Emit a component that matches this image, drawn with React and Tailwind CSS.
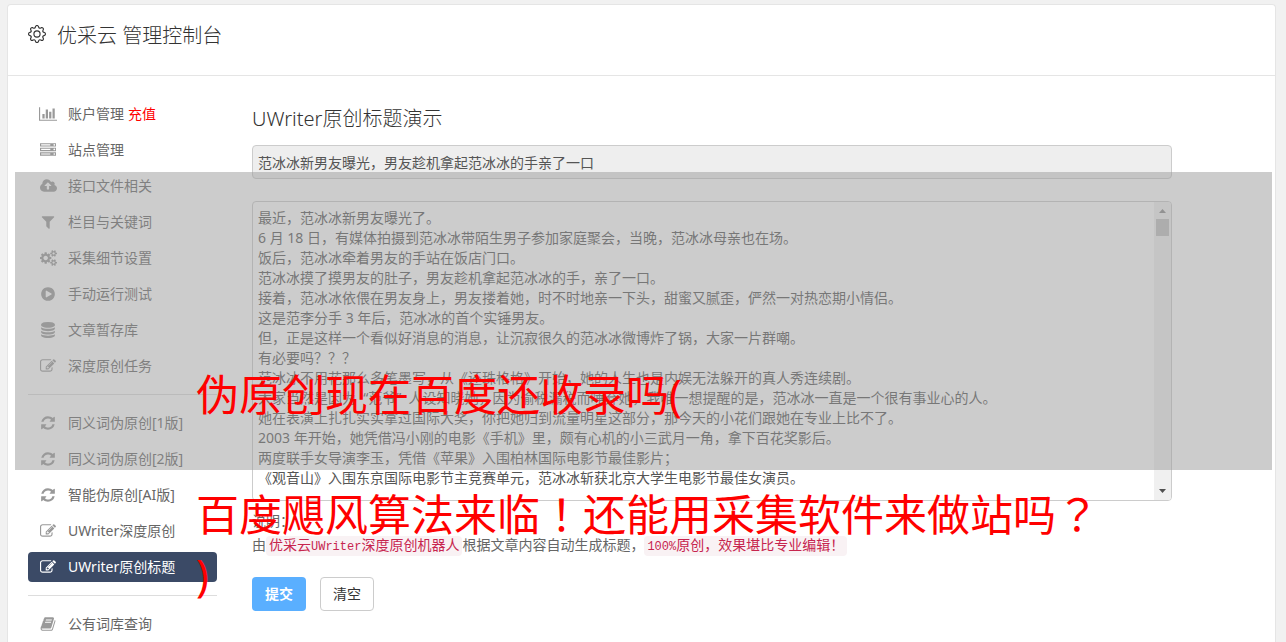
import React, { useState } from 'react';
import { BsGear } from 'react-icons/bs';
import clsx from 'clsx';

// 16px = 1792 units, so wider icons keep the same scale as the square ones
const ICONS = {
  chart: {
    width: 'w-[18px]',
    box: '0 0 2048 1792',
    d: 'M640 896v512h-256v-512h256zm384-512v1024h-256v-1024h256zm1024 1152v128h-2048v-1536h128v1408h1920zm-640-896v768h-256v-768h256zm384-384v1152h-256v-1152h256z',
  },
  server: {
    width: 'w-4',
    box: '0 0 1792 1792',
    d: 'M128 1408h1024v-128h-1024v128zm0-512h1024v-128h-1024v128zm1568 448q0-40-28-68t-68-28-68 28-28 68 28 68 68 28 68-28 28-68zm-1568-960h1024v-128h-1024v128zm1568 448q0-40-28-68t-68-28-68 28-28 68 28 68 68 28 68-28 28-68zm0-512q0-40-28-68t-68-28-68 28-28 68 28 68 68 28 68-28 28-68zm96 832v384h-1792v-384h1792zm0-512v384h-1792v-384h1792zm0-512v384h-1792v-384h1792z',
  },
  cloud: {
    width: 'w-[17px]',
    box: '0 0 1920 1792',
    d: 'M1280 864q0-14-9-23l-352-352q-9-9-23-9t-23 9l-351 351q-10 12-10 24 0 14 9 23t23 9h224v352q0 13 9.5 22.5t22.5 9.5h192q13 0 22.5-9.5t9.5-22.5v-352h224q13 0 22.5-9.5t9.5-22.5zm640 288q0 159-112.5 271.5t-271.5 112.5h-1088q-185 0-316.5-131.5t-131.5-316.5q0-130 70-240t188-165q-2-30-2-43 0-212 150-362t362-150q156 0 285.5 87t188.5 231q71-62 166-62 106 0 181 75t75 181q0 76-41 138 130 31 213.5 135.5t83.5 238.5z',
  },
  filter: {
    width: 'w-4',
    box: '0 0 1792 1792',
    d: 'M1595 295q17 41-14 70l-493 493v742q0 42-39 59-13 5-25 5-27 0-45-19l-256-256q-19-19-19-45v-486l-493-493q-31-29-14-70 17-39 59-39h1280q42 0 59 39z',
  },
  cogs: {
    width: 'w-[17px]',
    box: '0 0 1920 1792',
    d: 'M896 896q0-106-75-181t-181-75-181 75-75 181 75 181 181 75 181-75 75-181zm768 512q0-52-38-90t-90-38-90 38-38 90q0 53 37.5 90.5t90.5 37.5 90.5-37.5 37.5-90.5zm0-1024q0-52-38-90t-90-38-90 38-38 90q0 53 37.5 90.5t90.5 37.5 90.5-37.5 37.5-90.5zm-384 421v185q0 10-7 19.5t-16 10.5l-155 24q-11 35-32 76 34 48 90 115 7 11 7 20 0 12-7 19-23 30-82.5 89.5t-78.5 59.5q-11 0-21-7l-115-90q-37 19-77 31-11 108-23 155-7 24-30 24h-186q-11 0-20-7.5t-10-17.5l-23-153q-34-10-75-31l-118 89q-7 7-20 7-11 0-21-8-144-133-144-160 0-9 7-19 10-14 41-53t47-61q-23-44-35-82l-152-24q-10-1-17-9.5t-7-19.5v-185q0-10 7-19.5t16-10.5l155-24q11-35 32-76-34-48-90-115-7-11-7-20 0-12 7-20 22-30 82-89t79-59q11 0 21 7l115 90q34-18 77-32 11-108 23-154 7-24 30-24h186q11 0 20 7.5t10 17.5l23 153q34 10 75 31l118-89q8-7 20-7 11 0 21 8 144 133 144 160 0 8-7 19-12 16-42 54t-45 60q23 48 34 82l152 23q10 2 17 10.5t7 19.5zm640 533v140q0 16-149 31-12 27-30 52 51 113 51 138 0 4-4 7-122 71-124 71-8 0-46-47t-52-68q-20 2-30 2t-30-2q-14 21-52 68t-46 47q-2 0-124-71-4-3-4-7 0-25 51-138-18-25-30-52-149-15-149-31v-140q0-16 149-31 13-29 30-52-51-113-51-138 0-4 4-7 4-2 35-20t59-34 30-16q8 0 46 46.5t52 67.5q20-2 30-2t30 2q51-71 92-112l6-2q4 0 124 70 4 3 4 7 0 25-51 138 17 23 30 52 149 15 149 31zm0-1024v140q0 16-149 31-12 27-30 52 51 113 51 138 0 4-4 7-122 71-124 71-8 0-46-47t-52-68q-20 2-30 2t-30-2q-14 21-52 68t-46 47q-2 0-124-71-4-3-4-7 0-25 51-138-18-25-30-52-149-15-149-31v-140q0-16 149-31 13-29 30-52-51-113-51-138 0-4 4-7 4-2 35-20t59-34 30-16q8 0 46 46.5t52 67.5q20-2 30-2t30 2q51-71 92-112l6-2q4 0 124 70 4 3 4 7 0 25-51 138 17 23 30 52 149 15 149 31z',
  },
  play: {
    width: 'w-4',
    box: '0 0 1792 1792',
    d: 'M896 128q209 0 385.5 103t279.5 279.5 103 385.5-103 385.5-279.5 279.5-385.5 103-385.5-103-279.5-279.5-103-385.5 103-385.5 279.5-279.5 385.5-103zm384 823q32-18 32-55t-32-55l-544-320q-31-19-64-1-32 19-32 56v640q0 37 32 56 16 8 32 8 17 0 32-9z',
  },
  database: {
    width: 'w-4',
    box: '0 0 1792 1792',
    d: 'M896 768q237 0 443-43t325-127v170q0 69-103 128t-280 93.5-385 34.5-385-34.5-280-93.5-103-128v-170q119 84 325 127t443 43zm0 768q237 0 443-43t325-127v170q0 69-103 128t-280 93.5-385 34.5-385-34.5-280-93.5-103-128v-170q119 84 325 127t443 43zm0-384q237 0 443-43t325-127v170q0 69-103 128t-280 93.5-385 34.5-385-34.5-280-93.5-103-128v-170q119 84 325 127t443 43zm0-1152q208 0 385 34.5t280 93.5 103 128v128q0 69-103 128t-280 93.5-385 34.5-385-34.5-280-93.5-103-128v-128q0-69 103-128t280-93.5 385-34.5z',
  },
  edit: {
    width: 'w-4',
    box: '0 0 1792 1792',
    d: 'M888 1184l116-116-152-152-116 116v56h96v96h56zm440-720q-16-16-33 1l-350 350q-17 17-1 33t33-1l350-350q17-17 1-33zm80 594v190q0 119-84.5 203.5t-203.5 84.5h-832q-119 0-203.5-84.5t-84.5-203.5v-832q0-119 84.5-203.5t203.5-84.5h832q63 0 117 25 15 7 18 23 3 17-9 29l-49 49q-14 14-32 8-23-6-45-6h-832q-66 0-113 47t-47 113v832q0 66 47 113t113 47h832q66 0 113-47t47-113v-126q0-13 9-22l64-64q15-15 35-7t20 29zm-96-738l288 288-672 672h-288v-288zm444 132l-92 92-288-288 92-92q28-28 68-28t68 28l152 152q28 28 28 68t-28 68z',
  },
  refresh: {
    width: 'w-4',
    box: '0 0 1792 1792',
    d: 'M1639 1056q0 5-1 7-64 268-268 434.5t-478 166.5q-146 0-282.5-55t-243.5-157l-129 129q-19 19-45 19t-45-19-19-45v-448q0-26 19-45t45-19h448q26 0 45 19t19 45-19 45l-137 137q71 66 161 102t187 36q134 0 250-65t186-179q11-17 53-117 8-23 30-23h192q13 0 22.5 9.5t9.5 22.5zm25-800v448q0 26-19 45t-45 19h-448q-26 0-45-19t-19-45 19-45l138-138q-148-137-349-137-134 0-250 65t-186 179q-11 17-53 117-8 23-30 23h-199q-13 0-22.5-9.5t-9.5-22.5v-7q65-268 270-434.5t480-166.5q146 0 284 55.5t245 156.5l130-129q19-19 45-19t45 19 19 45z',
  },
  book: {
    width: 'w-4',
    box: '0 0 1792 1792',
    d: 'M1703 478q40 57 18 129l-275 906q-19 64-76.5 107.5t-122.5 43.5h-923q-77 0-148.5-53.5t-99.5-131.5q-24-67-2-127 0-4 3-27t4-37q1-8-3-21.5t-3-19.5q2-11 8-21t16.5-23.5 16.5-23.5q23-38 45-91.5t30-91.5q3-10 .5-30t-.5-28q3-11 17-28t17-23q21-36 42-92t25-90q1-9-2.5-32t.5-28q4-13 22-30.5t22-22.5q19-26 42.5-84.5t27.5-96.5q1-8-3-25.5t-2-26.5q2-8 9-18t18-23 17-21q8-12 16.5-30.5t15-35 16-36 19.5-32 26.5-23.5 36-11.5 47.5 5.5l-1 3q38-9 51-9h761q74 0 114 56t18 130l-274 906q-36 119-71.5 153.5t-128.5 34.5h-869q-27 0-38 15-11 16-1 43 24 70 144 70h923q29 0 56-15.5t35-41.5l300-987q7-22 5-57 38 15 59 43zm-1064 2q-4 13 2 22.5t20 9.5h608q13 0 25.5-9.5t16.5-22.5l21-64q4-13-2-22.5t-20-9.5h-608q-13 0-25.5 9.5t-16.5 22.5zm-83 256q-4 13 2 22.5t20 9.5h608q13 0 25.5-9.5t16.5-22.5l21-64q4-13-2-22.5t-20-9.5h-608q-13 0-25.5 9.5t-16.5 22.5z',
  },
};

const MENU = [
  [
    { icon: 'chart', label: '账户管理', extra: '充值' },
    { icon: 'server', label: '站点管理' },
    { icon: 'cloud', label: '接口文件相关' },
    { icon: 'filter', label: '栏目与关键词' },
    { icon: 'cogs', label: '采集细节设置' },
    { icon: 'play', label: '手动运行测试' },
    { icon: 'database', label: '文章暂存库' },
    { icon: 'edit', label: '深度原创任务' },
  ],
  [
    { icon: 'refresh', label: '同义词伪原创[1版]' },
    { icon: 'refresh', label: '同义词伪原创[2版]' },
    { icon: 'refresh', label: '智能伪原创[AI版]' },
    { icon: 'edit', label: 'UWriter深度原创' },
    { icon: 'edit', label: 'UWriter原创标题', active: true },
  ],
  [{ icon: 'book', label: '公有词库查询' }],
];

const DEFAULT_TITLE = '范冰冰新男友曝光，男友趁机拿起范冰冰的手亲了一口';

const DEFAULT_CONTENT = `最近，范冰冰新男友曝光了。
6 月 18 日，有媒体拍摄到范冰冰带陌生男子参加家庭聚会，当晚，范冰冰母亲也在场。
饭后，范冰冰牵着男友的手站在饭店门口。
范冰冰摸了摸男友的肚子，男友趁机拿起范冰冰的手，亲了一口。
接着，范冰冰依偎在男友身上，男友搂着她，时不时地亲一下头，甜蜜又腻歪，俨然一对热恋期小情侣。
这是范李分手 3 年后，范冰冰的首个实锤男友。
但，正是这样一个看似好消息的消息，让沉寂很久的范冰冰微博炸了锅，大家一片群嘲。
有必要吗？？？
范冰冰不用花那么多笔墨写，从《还珠格格》开始，她的人生也是内娱无法躲开的真人秀连续剧。
大家当然是因为  “范爷”  人设知晓她，因为偷税漏税而唾弃她，我唯一想提醒的是，范冰冰一直是一个很有事业心的人。
她在表演上扎扎实实拿过国际大奖，你把她归到流量明星这部分，那今天的小花们跟她在专业上比不了。
2003 年开始，她凭借冯小刚的电影《手机》里，颇有心机的小三武月一角，拿下百花奖影后。
两度联手女导演李玉，凭借《苹果》入围柏林国际电影节最佳影片；
《观音山》入围东京国际电影节主竞赛单元，范冰冰斩获北京大学生电影节最佳女演员。`;

const Icon = ({ name, className }) => {
  const icon = ICONS[name];
  return (
    <svg viewBox={icon.box} className={clsx('h-4 shrink-0', icon.width, className)} fill="currentColor" aria-hidden="true">
      <path d={icon.d} />
    </svg>
  );
};

const MenuItem = ({ item }) => (
  <li>
    <a
      href="#"
      className={clsx(
        'flex items-center h-[30px] pl-[10px] rounded',
        item.active ? 'bg-[#3b4a66] text-white' : 'text-[#666]'
      )}
    >
      <span className="flex w-5 mr-[10px] justify-center">
        <Icon name={item.icon} className={item.active ? 'text-white' : 'text-[#999]'} />
      </span>
      <span>{item.label}</span>
      {item.extra && <span className="ml-1 text-[#f00]">{item.extra}</span>}
    </a>
  </li>
);

const Sidebar = () => (
  <nav className="w-[189px] shrink-0 divide-y divide-[#ddd]">
    {MENU.map((group, i) => (
      <ul key={i} className={clsx('space-y-[6px]', i > 0 && 'pt-[13px]', i < MENU.length - 1 && 'pb-[13px]')}>
        {group.map((item) => (
          <MenuItem key={item.label} item={item} />
        ))}
      </ul>
    ))}
  </nav>
);

const ScrollBar = () => (
  <div className="absolute inset-y-px right-px w-[17px] rounded-r-[3px] bg-[#f0f0f0] flex flex-col items-center">
    <svg viewBox="0 0 17 17" className="w-[17px] h-[17px]" fill="#8a8a8a">
      <path d="M8.500 7L12 11H5z" />
    </svg>
    <div className="w-[13px] h-[17px] bg-[#c1c1c1]" />
    <svg viewBox="0 0 17 17" className="w-[17px] h-[17px] mt-auto" fill="#505050">
      <path d="M5 6h7L8.500 10z" />
    </svg>
  </div>
);

const Code = ({ children }) => (
  <code className="px-[3px] py-[2px] rounded bg-[#f9f2f4] text-[#c7254e] font-['Liberation_Mono','Noto_Sans_CJK_SC',monospace]">
    {children}
  </code>
);

const TitleForm = () => {
  const [title, setTitle] = useState(DEFAULT_TITLE);
  const [content, setContent] = useState(DEFAULT_CONTENT);

  const handleClear = () => {
    setTitle('');
    setContent('');
  };

  return (
    <form className="flex-1 min-w-0 max-w-[920px]" onSubmit={(e) => e.preventDefault()}>
      <h2 className="pt-[7px] pb-[13px] text-[20px] leading-[26px] font-light text-[#333]">UWriter原创标题演示</h2>
      <input
        type="text"
        aria-label="标题"
        value={title}
        readOnly
        className="block w-full h-[34px] px-[5px] bg-[#eee] border border-[#ccc] rounded text-[#555]"
      />
      <div className="relative mt-[22px]">
        <textarea
          aria-label="文章内容"
          value={content}
          onChange={(e) => setContent(e.target.value)}
          className="block w-full h-[300px] py-[6px] pl-[5px] pr-6 border border-[#ccc] rounded text-[#555] leading-5 resize-none overflow-y-scroll [scrollbar-width:none]"
        />
        <ScrollBar />
      </div>
      <div className="mt-2 text-[#666] leading-6">
        <p>说明：</p>
        <p>
          由
          <Code>
            优采云<span className="text-xs">UWriter</span>深度原创机器人
          </Code>
          根据文章内容自动生成标题，
          <Code>
            <span className="text-xs">100%</span>原创，效果堪比专业编辑！
          </Code>
        </p>
      </div>
      <div className="flex gap-[14px] mt-[19px]">
        <button type="submit" className="h-[34px] w-[54px] rounded bg-[#5aafff] text-white font-bold">
          提交
        </button>
        <button
          type="button"
          onClick={handleClear}
          className="h-[34px] w-[54px] rounded border border-[#ccc] bg-white text-[#333]"
        >
          清空
        </button>
      </div>
    </form>
  );
};

// punctuation that sits in the middle of its square
const Mark = ({ children }) => (
  <span className="leading-none font-['Noto_Sans_CJK_JP',sans-serif]" lang="ja">
    {children}
  </span>
);

const Watermark = () => (
  <div className="absolute left-[15px] right-[14px] top-[172px] h-[298px] bg-[#999]/50 pointer-events-none">
    <p className="pl-[181px] pt-[193px] text-[43px] leading-[60px] text-[#f00] whitespace-nowrap">
      伪原创现在百度还收录吗(
      <br />
      <br />
      百度飓风算法来临<Mark>！</Mark>还能用采集软件来做站吗<Mark>？</Mark>
      <br />)
    </p>
  </div>
);

const App = () => {
  return (
    <div className="relative h-screen overflow-hidden flex flex-col pt-[4px] pl-[7px] pr-[10px] bg-[#f1f1f1] text-sm font-['Noto_Sans','Noto_Sans_CJK_SC',sans-serif]">
      <div className="flex-1 bg-white border border-b-0 border-[#e5e5e5] rounded-t">
        <header className="flex items-center h-[71px] pl-5 pb-2 border-b border-[#e5e5e5] text-[#333]">
          <BsGear className="w-[18px] h-[18px] mb-1" />
          <h1 className="ml-[11px] text-[20px] font-light">优采云 管理控制台</h1>
        </header>
        <div className="flex gap-[35px] px-5 pt-[23px]">
          <Sidebar />
          <TitleForm />
        </div>
      </div>
      <Watermark />
    </div>
  );
};

export default App;
